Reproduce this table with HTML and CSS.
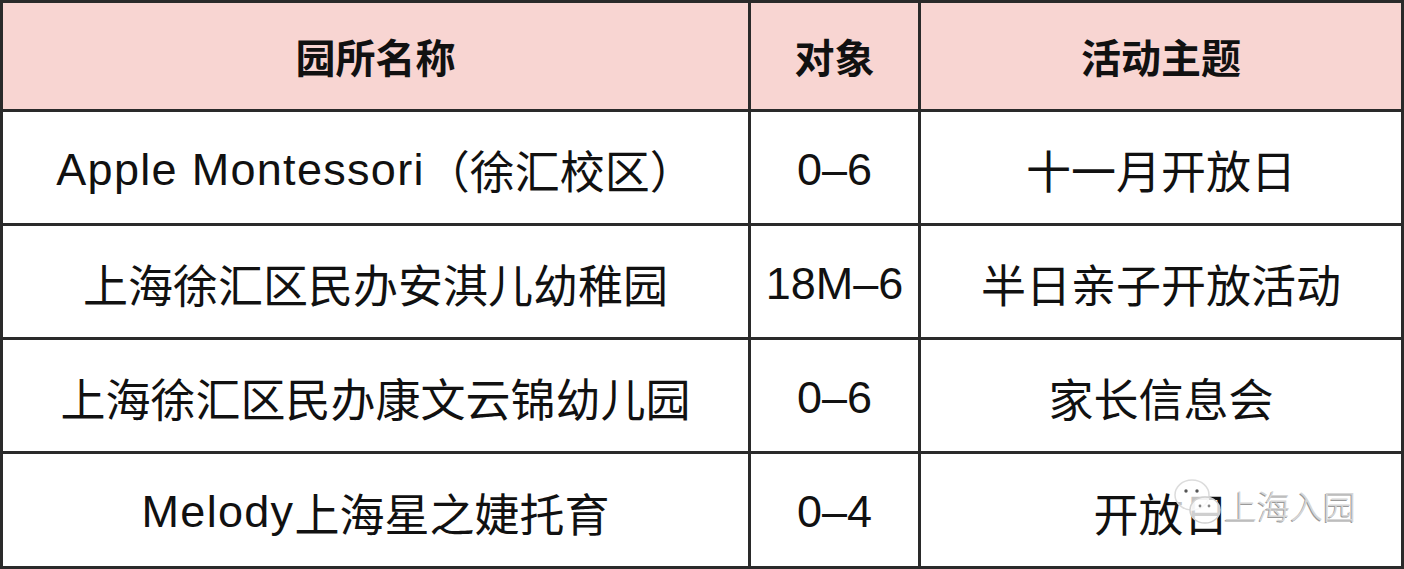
FILE: index.html
```html
<!DOCTYPE html>
<html lang="zh-CN">
<head>
<meta charset="utf-8">
<link rel="stylesheet" href="styles.css">
</head>
<body>
<div class="page">
  <div class="grid">
    <div class="cell head">园所名称</div>
    <div class="cell head">对象</div>
    <div class="cell head">活动主题</div>

    <div class="cell"><span class="latin">Apple Montessori</span>（徐汇校区）</div>
    <div class="cell">0–6</div>
    <div class="cell">十一月开放日</div>

    <div class="cell">上海徐汇区民办安淇儿幼稚园</div>
    <div class="cell">18M–6</div>
    <div class="cell">半日亲子开放活动</div>

    <div class="cell">上海徐汇区民办康文云锦幼儿园</div>
    <div class="cell">0–6</div>
    <div class="cell">家长信息会</div>

    <div class="cell"><span class="latin">Melody</span>上海星之婕托育</div>
    <div class="cell">0–4</div>
    <div class="cell">开放日</div>
  </div>
  <div class="watermark">
    <svg class="wx" width="56" height="56" viewBox="0 0 56 56">
      <ellipse cx="20" cy="20" rx="17" ry="15" fill="rgba(255,255,255,0.75)" stroke="#dcdcdc" stroke-width="1.5"/>
      <circle cx="14" cy="16" r="1.7" fill="#555"/>
      <circle cx="25" cy="16" r="1.7" fill="#555"/>
      <ellipse cx="33" cy="35" rx="15" ry="13" fill="rgba(255,255,255,0.8)" stroke="#d0d0d0" stroke-width="1.5"/>
      <circle cx="28" cy="31" r="1.4" fill="#888"/>
      <circle cx="37" cy="31" r="1.4" fill="#888"/>
    </svg>
    <span class="wm-text">上海入园</span>
  </div>
</div>
</body>
</html>
```
FILE: styles.css
```css
html, body {
  margin: 0;
  padding: 0;
  background: #ffffff;
}

.page {
  position: relative;
  width: 1404px;
  height: 569px;
  overflow: hidden;
}

.grid {
  display: grid;
  grid-template-columns: 745px 167px 480px;
  grid-template-rows: 106px 111px 111px 111px 112px;
  gap: 3px;
  padding: 3px;
  background: #2a2a2a;
  width: 1404px;
  height: 569px;
  box-sizing: border-box;
}

.cell {
  background: #ffffff;
  display: flex;
  align-items: center;
  justify-content: center;
  font-family: "Liberation Sans", "Noto Sans CJK SC", sans-serif;
  font-size: 45px;
  color: #111111;
  white-space: nowrap;
  padding-top: 4px;
  box-sizing: border-box;
}

.latin {
  letter-spacing: 1.3px;
}

.cell.head {
  background: #f8d5d2;
  font-size: 40px;
  font-weight: 700;
  padding-top: 0;
}

.watermark {
  position: absolute;
  left: 1172px;
  top: 475px;
  display: flex;
  align-items: center;
}

.wx {
  display: block;
}

.wm-text {
  font-family: "Noto Sans CJK SC", sans-serif;
  font-weight: 300;
  font-size: 33px;
  color: #d6d6d6;
  text-shadow: -1px 1px 0 #9a9a9a;
  margin-left: -4px;
  margin-top: 4px;
}
```
